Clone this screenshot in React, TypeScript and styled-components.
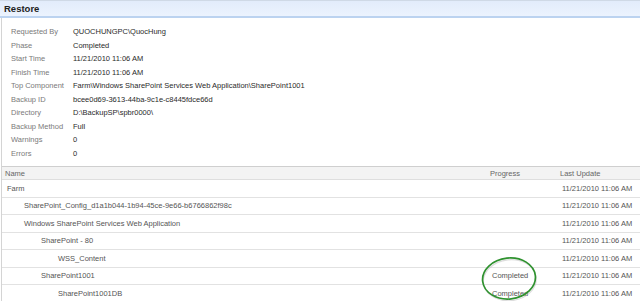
import React from "react";
import styled, { createGlobalStyle } from "styled-components";

const GlobalStyle = createGlobalStyle`
  html, body {
    margin: 0;
    padding: 0;
    background: #fff;
    overflow: hidden;
  }
  body {
    font-family: "Liberation Sans", Arial, sans-serif;
  }
`;

type Detail = { label: string; value: string };

const details: Detail[] = [
  { label: "Requested By", value: "QUOCHUNGPC\\QuocHung" },
  { label: "Phase", value: "Completed" },
  { label: "Start Time", value: "11/21/2010 11:06 AM" },
  { label: "Finish Time", value: "11/21/2010 11:06 AM" },
  {
    label: "Top Component",
    value: "Farm\\Windows SharePoint Services Web Application\\SharePoint1001",
  },
  { label: "Backup ID", value: "bcee0d69-3613-44ba-9c1e-c8445fdce66d" },
  { label: "Directory", value: "D:\\BackupSP\\spbr0000\\" },
  { label: "Backup Method", value: "Full" },
  { label: "Warnings", value: "0" },
  { label: "Errors", value: "0" },
];

type Item = { name: string; level: number; progress?: string; updated: string };

const stamp = "11/21/2010 11:06 AM";

const items: Item[] = [
  { name: "Farm", level: 0, updated: stamp },
  { name: "SharePoint_Config_d1a1b044-1b94-45ce-9e66-b6766862f98c", level: 1, updated: stamp },
  { name: "Windows SharePoint Services Web Application", level: 1, updated: stamp },
  { name: "SharePoint - 80", level: 2, updated: stamp },
  { name: "WSS_Content", level: 3, updated: stamp },
  { name: "SharePoint1001", level: 2, progress: "Completed", updated: stamp },
  { name: "SharePoint1001DB", level: 3, progress: "Completed", updated: stamp },
];

const Page = styled.div`
  position: relative;
  width: 640px;
  height: 301px;
  overflow: hidden;
`;

const TitleBar = styled.div`
  height: 15px;
  padding-left: 4px;
  display: flex;
  align-items: center;
  border-top: 1px solid #cfd9e6;
  border-bottom: 2px solid #bcd3f0;
  background: linear-gradient(#e2ecfb, #ecf3fe);
  font-weight: bold;
  font-size: 9.5px;
  color: #222;
`;

const Body = styled.div`
  border-left: 1px solid #d4d4d4;
  margin-left: 1px;
`;

const Details = styled.div`
  display: grid;
  grid-template-columns: 62px 1fr;
  grid-auto-rows: 13.5px;
  align-items: center;
  padding: 7px 0 6px 9px;
  font-size: 7.5px;
`;

const Label = styled.div`
  color: #7a7a7a;
  white-space: nowrap;
`;

const Value = styled.div`
  color: #2a2a2a;
  white-space: nowrap;
`;

const Grid = styled.div`
  font-size: 7.5px;
  color: #555;
`;

const HeadRow = styled.div`
  display: grid;
  grid-template-columns: 1fr 70px 83px;
  height: 12px;
  align-items: center;
  background: #f3f3f3;
  border-top: 1px solid #cfcfcf;
  border-bottom: 1px solid #dedede;
`;

const HeadCell = styled.div`
  padding-left: 3px;
  color: #666;
`;

const Row = styled.div`
  display: grid;
  grid-template-columns: 1fr 70px 83px;
  height: 16.5px;
  align-items: center;
  border-bottom: 1px solid #e2e2e2;
`;

const NameCell = styled.div<{ $level: number }>`
  padding-left: ${(p) => 5 + p.$level * 17}px;
  white-space: nowrap;
`;

const Cell = styled.div`
  padding-left: 5px;
  white-space: nowrap;
`;

const Mark = styled.svg`
  position: absolute;
  left: 476px;
  top: 252px;
  overflow: visible;
`;

export default function App() {
  return (
    <Page>
      <GlobalStyle />
      <TitleBar>Restore</TitleBar>
      <Body>
        <Details>
          {details.map((d) => (
            <React.Fragment key={d.label}>
              <Label>{d.label}</Label>
              <Value>{d.value}</Value>
            </React.Fragment>
          ))}
        </Details>
        <Grid>
          <HeadRow>
            <HeadCell>Name</HeadCell>
            <HeadCell>Progress</HeadCell>
            <HeadCell>Last Update</HeadCell>
          </HeadRow>
          {items.map((it) => (
            <Row key={it.name}>
              <NameCell $level={it.level}>{it.name}</NameCell>
              <Cell>{it.progress}</Cell>
              <Cell>{it.updated}</Cell>
            </Row>
          ))}
        </Grid>
      </Body>
      <Mark width="66" height="52" viewBox="0 0 66 52">
        <ellipse
          cx="33"
          cy="27"
          rx="26.5"
          ry="20.5"
          fill="none"
          stroke="#bbb"
          strokeWidth="1.2"
          opacity="0.5"
          transform="translate(0.8 1.2) rotate(-6 33 27)"
        />
        <ellipse
          cx="33"
          cy="26.5"
          rx="26.5"
          ry="20.5"
          fill="none"
          stroke="#2f922f"
          strokeWidth="1.7"
          transform="rotate(-6 33 26.5)"
        />
      </Mark>
    </Page>
  );
}
